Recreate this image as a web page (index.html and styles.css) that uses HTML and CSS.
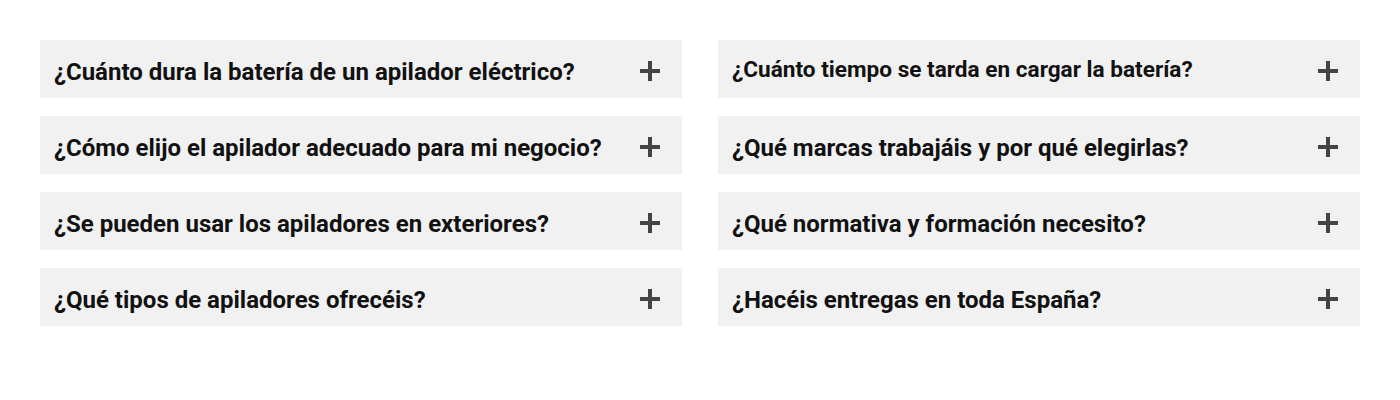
FILE: index.html
```html
<!DOCTYPE html>
<html lang="es">
<head>
<meta charset="utf-8">
<link rel="stylesheet" href="styles.css">
</head>
<body>
<div class="faq">
  <div class="col">
    <div class="item"><span class="q">¿Cuánto dura la batería de un apilador eléctrico?</span><span class="icon"><svg width="20" height="20" viewBox="0 0 20 20"><path d="M10 0v20M0 10h20" stroke="#444" stroke-width="4"/></svg></span></div>
    <div class="item"><span class="q">¿Cómo elijo el apilador adecuado para mi negocio?</span><span class="icon"><svg width="20" height="20" viewBox="0 0 20 20"><path d="M10 0v20M0 10h20" stroke="#444" stroke-width="4"/></svg></span></div>
    <div class="item"><span class="q">¿Se pueden usar los apiladores en exteriores?</span><span class="icon"><svg width="20" height="20" viewBox="0 0 20 20"><path d="M10 0v20M0 10h20" stroke="#444" stroke-width="4"/></svg></span></div>
    <div class="item"><span class="q">¿Qué tipos de apiladores ofrecéis?</span><span class="icon"><svg width="20" height="20" viewBox="0 0 20 20"><path d="M10 0v20M0 10h20" stroke="#444" stroke-width="4"/></svg></span></div>
  </div>
  <div class="col">
    <div class="item"><span class="q q-sm">¿Cuánto tiempo se tarda en cargar la batería?</span><span class="icon"><svg width="20" height="20" viewBox="0 0 20 20"><path d="M10 0v20M0 10h20" stroke="#444" stroke-width="4"/></svg></span></div>
    <div class="item"><span class="q">¿Qué marcas trabajáis y por qué elegirlas?</span><span class="icon"><svg width="20" height="20" viewBox="0 0 20 20"><path d="M10 0v20M0 10h20" stroke="#444" stroke-width="4"/></svg></span></div>
    <div class="item"><span class="q">¿Qué normativa y formación necesito?</span><span class="icon"><svg width="20" height="20" viewBox="0 0 20 20"><path d="M10 0v20M0 10h20" stroke="#444" stroke-width="4"/></svg></span></div>
    <div class="item"><span class="q">¿Hacéis entregas en toda España?</span><span class="icon"><svg width="20" height="20" viewBox="0 0 20 20"><path d="M10 0v20M0 10h20" stroke="#444" stroke-width="4"/></svg></span></div>
  </div>
</div>
</body>
</html>
```
FILE: styles.css
```css
html, body {
  margin: 0;
  padding: 0;
  background: #fff;
}
body {
  font-family: Roboto, "Liberation Sans", sans-serif;
}
.faq {
  display: grid;
  grid-template-columns: 642px 642px;
  column-gap: 36px;
  padding: 40px 40px 0 40px;
}
.col {
  display: flex;
  flex-direction: column;
  gap: 18px;
}
.item {
  display: flex;
  align-items: center;
  justify-content: space-between;
  height: 58px;
  background: #f1f1f1;
  padding: 0 22px 0 14px;
  box-sizing: border-box;
}
.q {
  font-size: 24px;
  font-weight: 700;
  color: #111;
  line-height: 1;
  margin-top: 6px;
}
.q-sm {
  font-size: 22.6px;
  margin-top: 2px;
}
.icon {
  display: flex;
  width: 20px;
  height: 20px;
  margin-top: 4px;
}
```
